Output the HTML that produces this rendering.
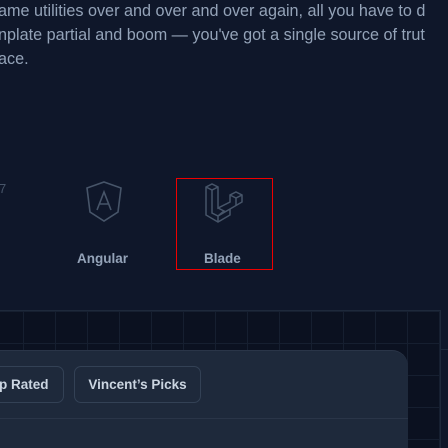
<!DOCTYPE html>
<html><head><style>
html,body{margin:0;width:448px;height:448px;overflow:hidden}
body{background:#0f172a;position:relative;font-family:"Liberation Sans",sans-serif}
.t{position:absolute;left:-2px;white-space:nowrap;color:#94a3b8;font-size:16.2px;line-height:24px}
.grid{position:absolute;left:0;top:310px;width:440px;height:138px;background-color:#0b1120;
background-image:linear-gradient(to right,#161f30 1px,transparent 1px),linear-gradient(to bottom,#161f30 1px,transparent 1px);
background-size:32px 32px;background-position:23px 0;border-top:1px solid #1e293b;border-right:1px solid #1e293b}
.panel{position:absolute;left:-10px;top:350px;width:418px;height:98px;background:#1e293b;border-radius:0 16px 0 0;border-top:1px solid #2a3548}
.btn{position:absolute;top:366px;height:37px;border:1px solid #334155;border-radius:7px;color:#cbd5e1;font-weight:bold;font-size:13.5px;line-height:35px;box-sizing:border-box}
.lbl{position:absolute;top:251px;font-weight:bold;font-size:13.5px;color:#94a3b8}
</style></head><body>
<div class="t" style="top:-1px">ame utilities over and over and over again, all you have to d</div>
<div class="t" style="top:23px">nplate partial and boom — you've got a single source of trut</div>
<div class="t" style="top:47px">ace.</div>
<div style="position:absolute;left:-1px;top:181px;color:#475569;font-size:13px">7</div>
<svg style="position:absolute;left:84px;top:180px" width="40" height="44" viewBox="0 0 40 44" fill="none" stroke="#475569" stroke-width="1.6">
<path d="M20 2 L37 8 L34 32 L20 41 L6 32 L3 8 Z"/><path d="M13 30 L20 12 L27 30 M15.5 24 H24.5"/></svg>
<svg style="position:absolute;left:204px;top:182px" width="40" height="42" viewBox="0 0 40 42" fill="none" stroke="#475569" stroke-width="1.5">
<path d="M2 5 L8 2 L14 5 L14 26 L26 20 L26 13 L32 10 L38 13 L38 20 L26 27 L26 33 L14 40 L2 33 Z M2 5 L8 8 L14 5 M8 8 V31 L14 34 L26 27 M14 26 L20 29 L14 34 V40 M26 13 L32 16 L38 13 M32 16 V23"/></svg>
<div class="lbl" style="left:77px">Angular</div>
<div class="lbl" style="left:204px">Blade</div>
<div style="position:absolute;left:176px;top:178px;width:97px;height:92px;border:1px solid #e00;box-sizing:border-box"></div>
<div class="grid"></div>
<div style="position:absolute;left:441px;top:349px;width:7px;height:1px;background:#1e293b"></div>
<div class="panel"></div>
<div class="btn" style="left:-20px;width:84px;padding-left:18px">p Rated</div>
<div class="btn" style="left:74px;width:127px;text-align:center">Vincent’s Picks</div>
<div style="position:absolute;left:0;top:418px;width:408px;height:1px;background:#2a3548"></div>
</body></html>
